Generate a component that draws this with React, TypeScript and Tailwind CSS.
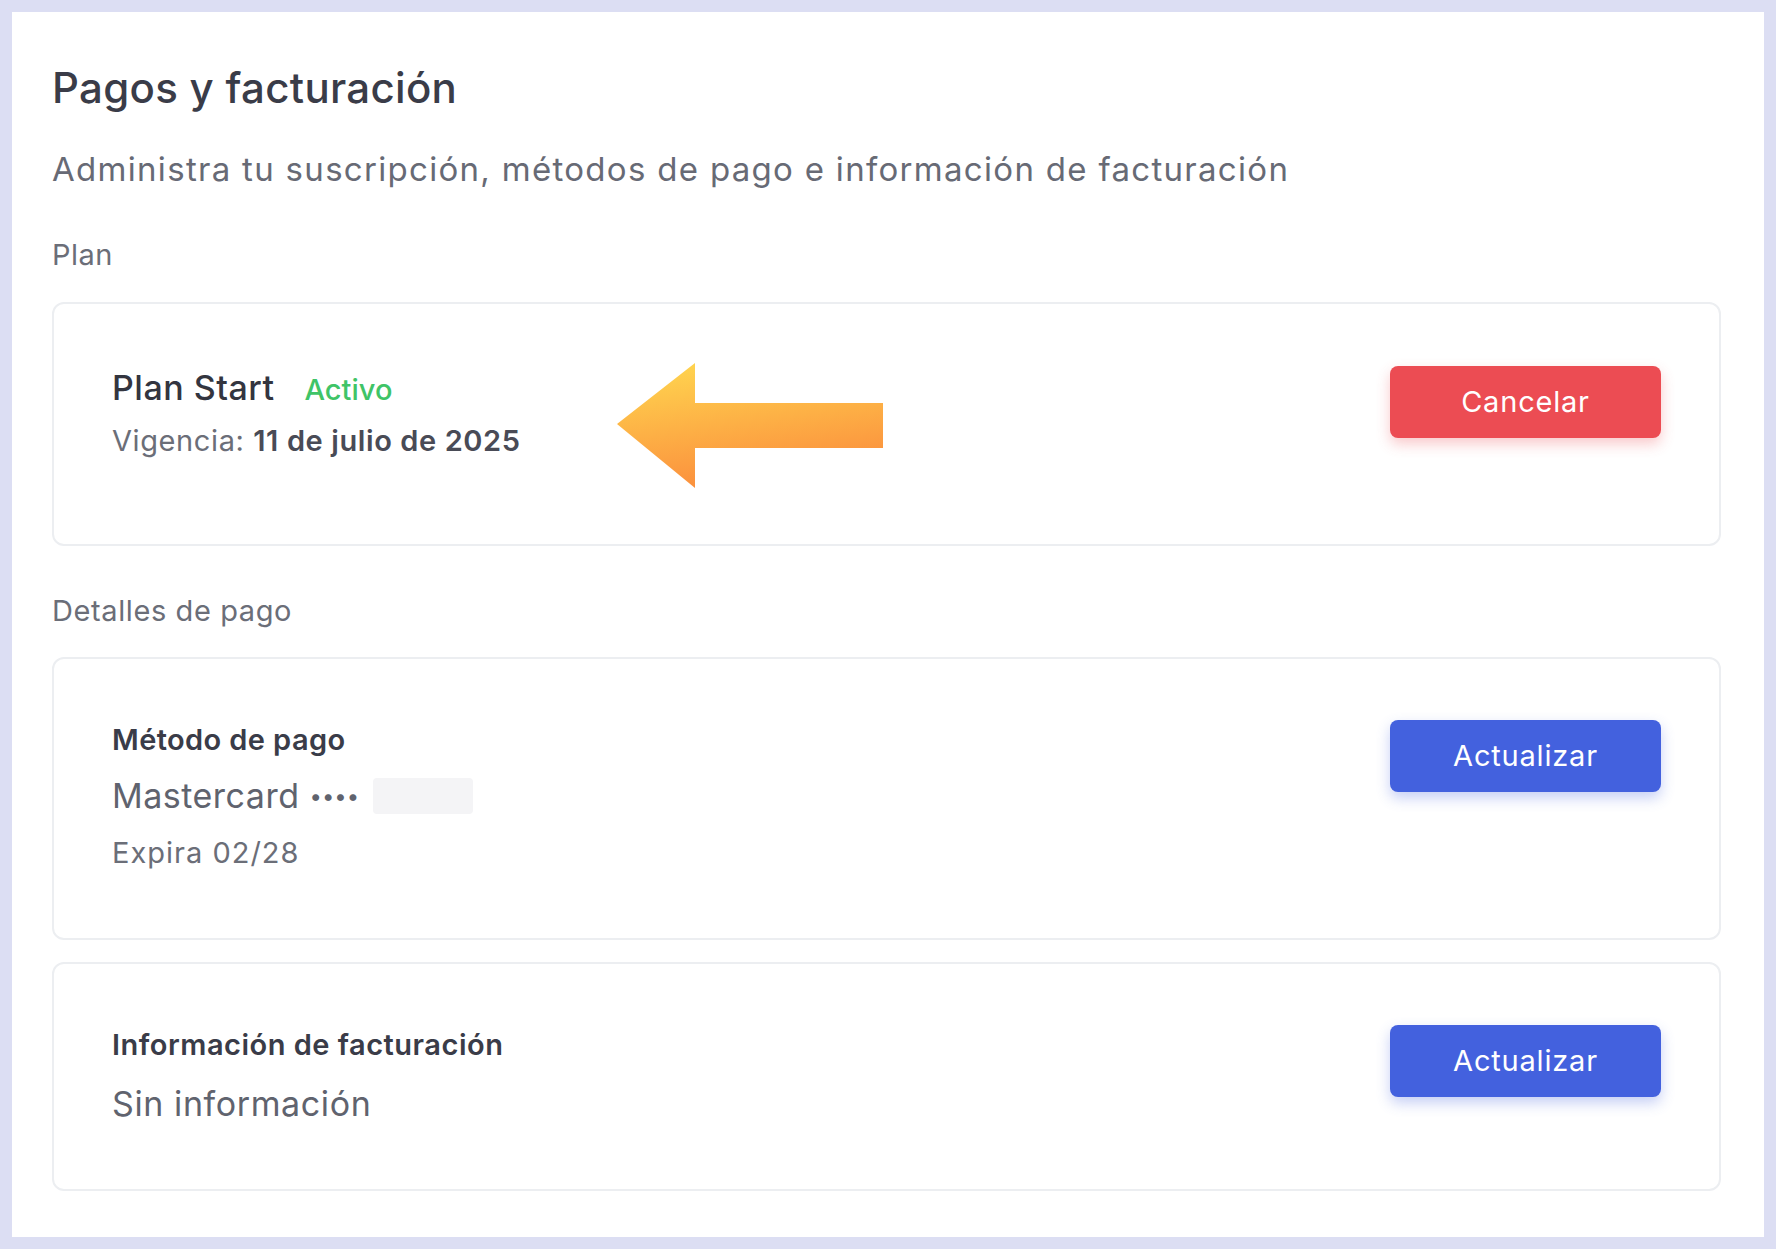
import React from "react";

const font = { fontFamily: "Inter, 'Noto Sans', sans-serif" };

function Btn({ children, red }: { children: React.ReactNode; red?: boolean }) {
  return (
    <button
      className={
        "w-[271px] h-[72px] rounded-[8px] text-white text-[29px] tracking-[0.8px] " +
        (red ? "bg-[#ec4c53] shadow-[0_6px_14px_rgba(236,76,83,0.3)]" : "bg-[#4361de] shadow-[0_6px_14px_rgba(67,97,222,0.3)]")
      }
    >
      {children}
    </button>
  );
}

export default function App() {
  return (
    <div className="w-[1776px] h-[1249px] bg-[#dcdef3] p-[12px]" style={font}>
      <div className="w-full h-full bg-white pl-[40px] pr-[43px] pt-[48px]">
        <h1 className="text-[42px] leading-[56px] font-medium text-[#3a3c48] tracking-[0.3px]">Pagos y facturación</h1>
        <p className="mt-[30px] text-[33px] leading-[46px] text-[#676a75] tracking-[1.3px]">
          Administra tu suscripción, métodos de pago e información de facturación
        </p>
        <p className="mt-[44px] text-[29px] leading-[38px] text-[#6b6e78] tracking-[0.5px]">Plan</p>
        <div className="mt-[28px] h-[244px] border-2 border-[#eceef1] rounded-[12px] pl-[58px] pr-[58px] pt-[62px] flex justify-between items-start relative">
          <div>
            <div className="flex items-baseline gap-[30px]">
              <span className="text-[34px] leading-[44px] font-medium text-[#33353f] tracking-[0.5px]">Plan Start</span>
              <span className="text-[29px] font-medium text-[#3fc467]">Activo</span>
            </div>
            <div className="mt-[9px] text-[29px] leading-[40px] text-[#6b6e78] tracking-[0.6px]">
              Vigencia: <span className="font-semibold text-[#494b56]">11 de julio de 2025</span>
            </div>
          </div>
          <svg className="absolute left-[563px] top-[59px]" width="268" height="125" viewBox="0 0 268 125">
            <defs>
              <linearGradient id="g" x1="0.2" y1="0" x2="0.5" y2="1">
                <stop offset="0" stopColor="#ffd54f" />
                <stop offset="1" stopColor="#fb8c3c" />
              </linearGradient>
            </defs>
            <polygon points="0,61 78,0 78,40 266,40 266,85 78,85 78,125" fill="url(#g)" />
          </svg>
          <Btn red>Cancelar</Btn>
        </div>
        <p className="mt-[46px] text-[29px] leading-[38px] text-[#6b6e78] tracking-[0.6px]">Detalles de pago</p>
        <div className="mt-[27px] h-[283px] border-2 border-[#eceef1] rounded-[12px] pl-[58px] pr-[58px] pt-[61px] flex justify-between items-start">
          <div>
            <div className="text-[29px] leading-[40px] font-semibold text-[#3a3c48] tracking-[0.4px]">Método de pago</div>
            <div className="mt-[13px] flex items-center text-[34px] leading-[46px] text-[#60636e] tracking-[0.5px]">
              Mastercard <span className="ml-[10px] text-[22px] tracking-[0px]">••••</span>
              <span className="ml-[14px] inline-block w-[100px] h-[36px] bg-[#f4f4f6] rounded-[4px]" />
            </div>
            <div className="mt-[14px] text-[29px] leading-[40px] text-[#6b6e78] tracking-[1px]">Expira 02/28</div>
          </div>
          <Btn>Actualizar</Btn>
        </div>
        <div className="mt-[22px] h-[229px] border-2 border-[#eceef1] rounded-[12px] pl-[58px] pr-[58px] pt-[61px] flex justify-between items-start">
          <div>
            <div className="text-[29px] leading-[40px] font-semibold text-[#3a3c48] tracking-[0.5px]">Información de facturación</div>
            <div className="mt-[16px] text-[34px] leading-[46px] text-[#60636e] tracking-[0.6px]">Sin información</div>
          </div>
          <Btn>Actualizar</Btn>
        </div>
      </div>
    </div>
  );
}
